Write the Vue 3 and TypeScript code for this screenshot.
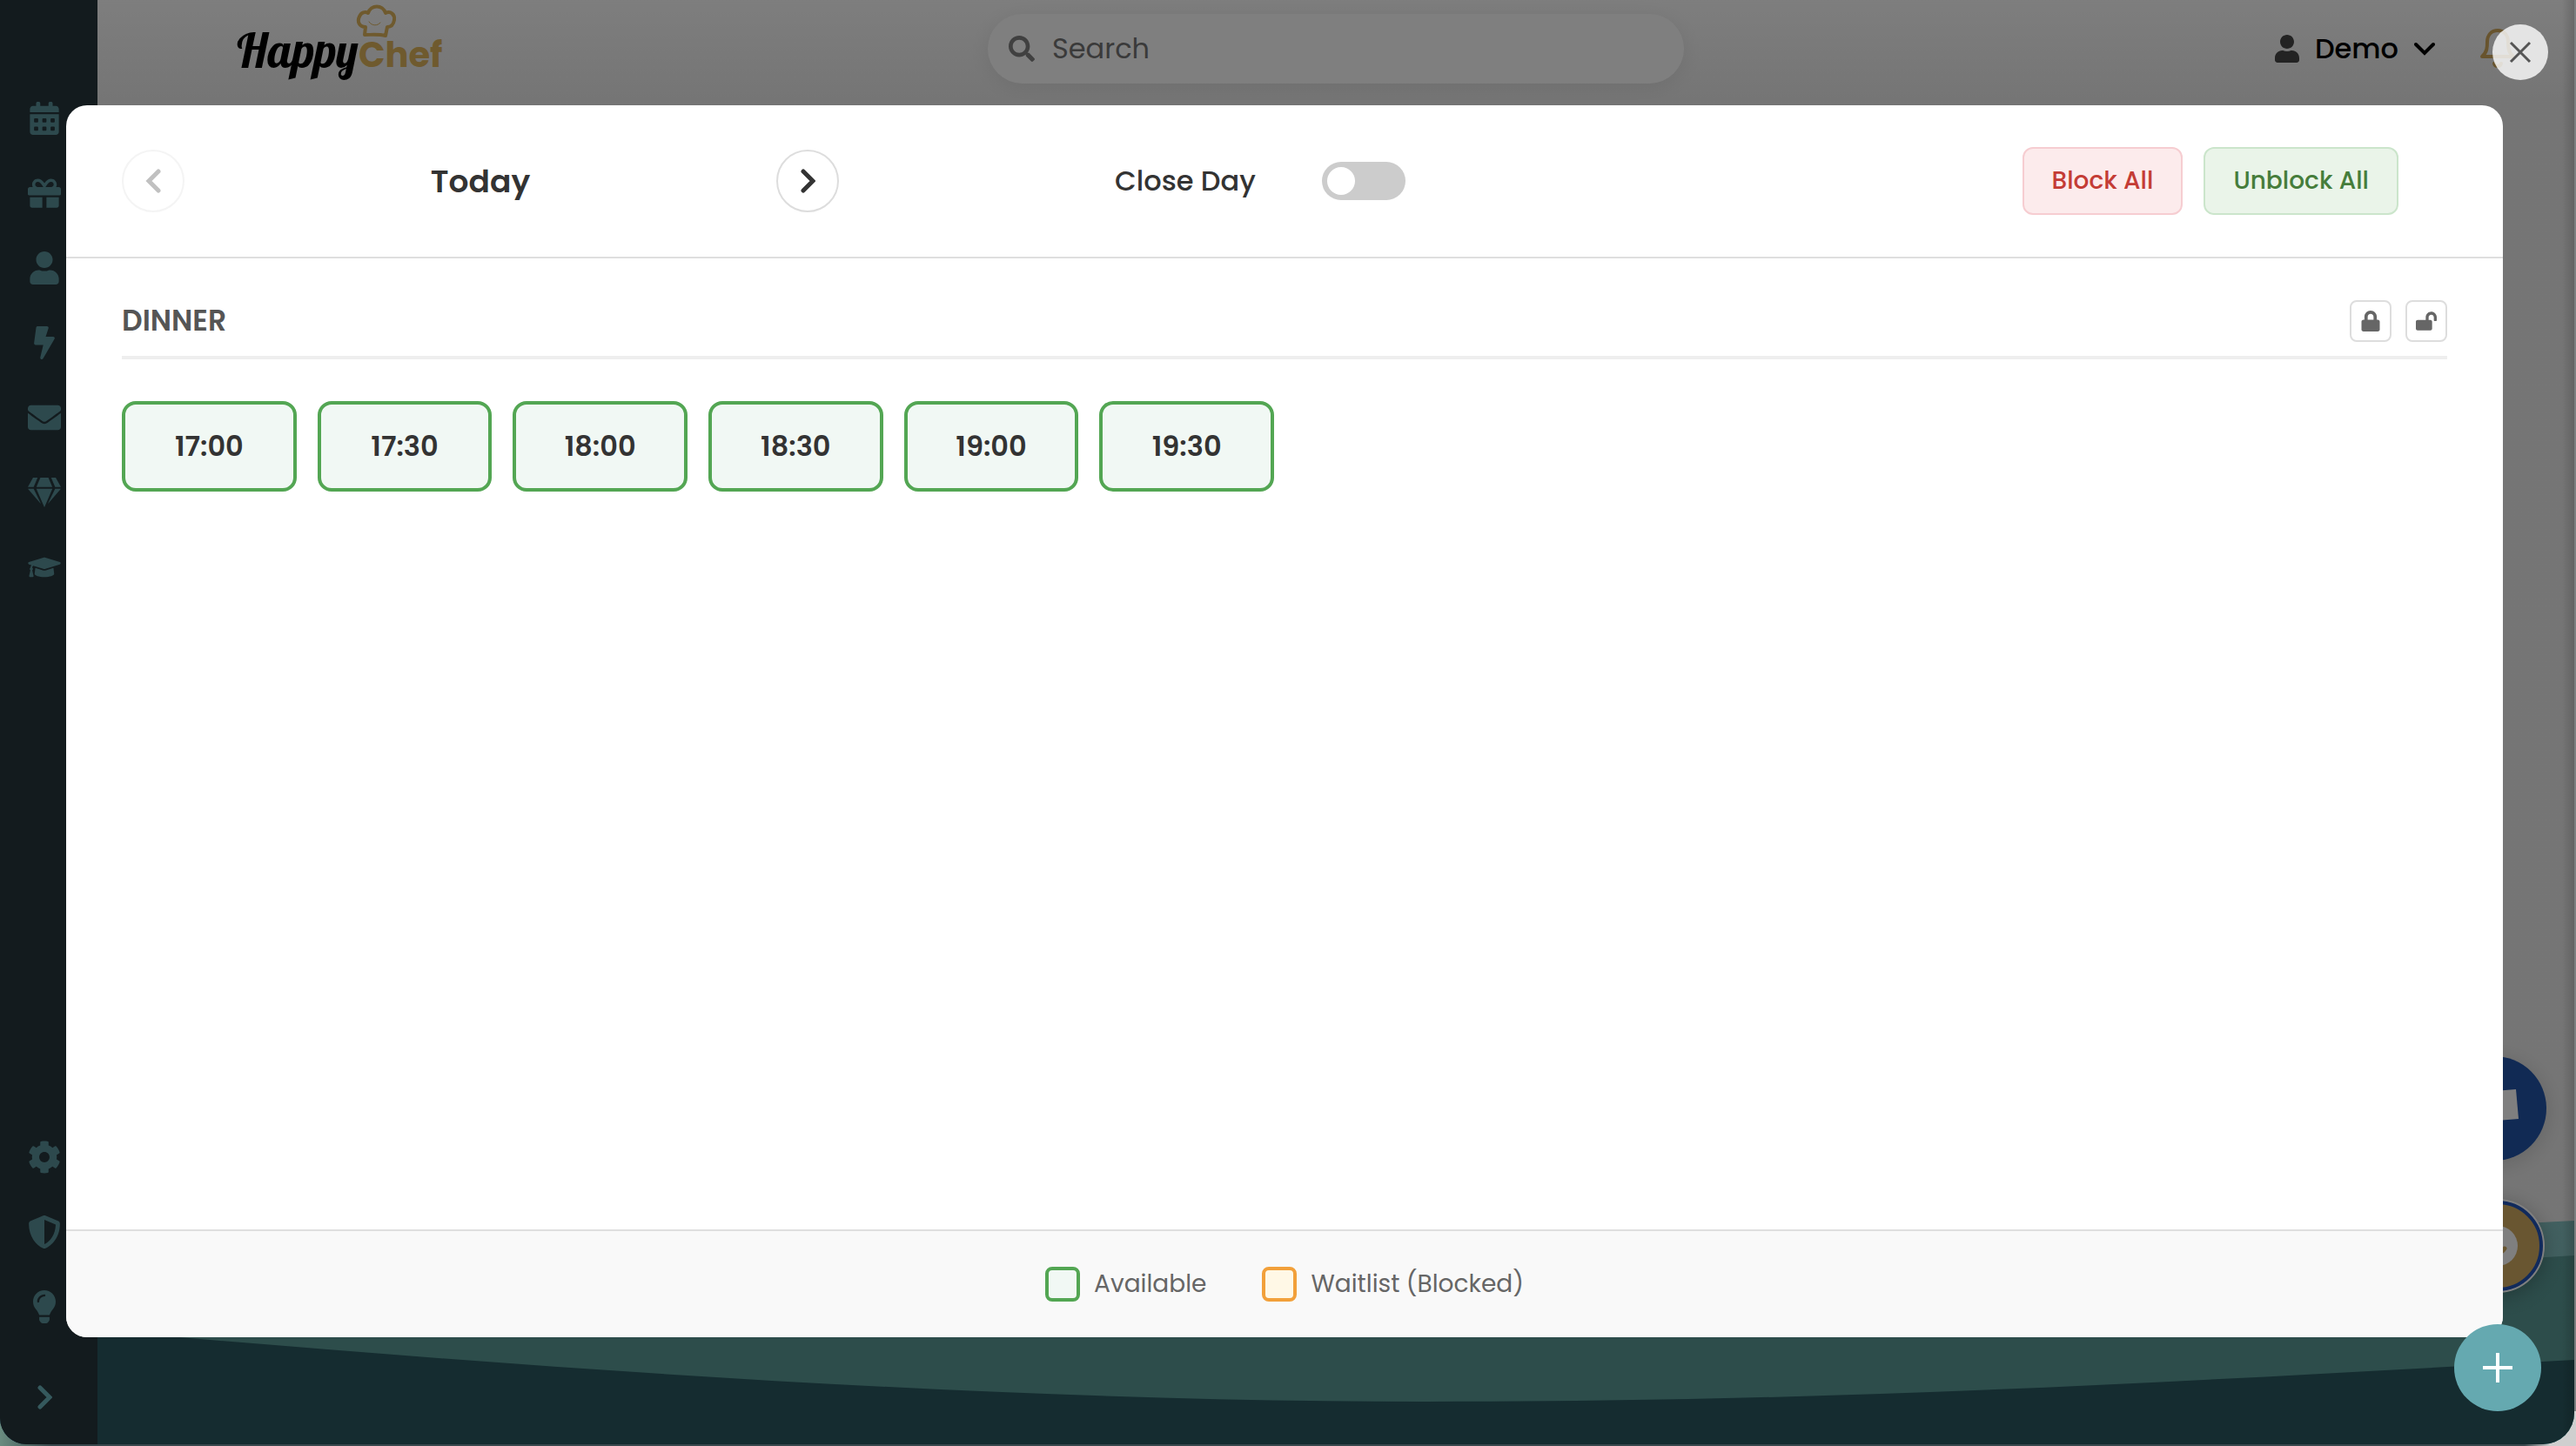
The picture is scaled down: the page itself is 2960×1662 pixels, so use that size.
<script setup lang="ts">
import { ref } from 'vue'

interface NavIcon {
  label: string
  viewBox: string
  width: number
  height: number
  path: string
}

const mainNav: NavIcon[] = [
  {
    label: 'Calendar', viewBox: '0 0 448 512', width: 34, height: 38,
    path: 'M0 464c0 26.500 21.500 48 48 48h352c26.500 0 48-21.500 48-48V192H0zM64 268c0-7 5-12 12-12h40c7 0 12 5 12 12v40c0 7-5 12-12 12H76c-7 0-12-5-12-12zm128 0c0-7 5-12 12-12h40c7 0 12 5 12 12v40c0 7-5 12-12 12h-40c-7 0-12-5-12-12zm128 0c0-7 5-12 12-12h40c7 0 12 5 12 12v40c0 7-5 12-12 12h-40c-7 0-12-5-12-12zM64 396c0-7 5-12 12-12h40c7 0 12 5 12 12v40c0 7-5 12-12 12H76c-7 0-12-5-12-12zm128 0c0-7 5-12 12-12h40c7 0 12 5 12 12v40c0 7-5 12-12 12h-40c-7 0-12-5-12-12zm128 0c0-7 5-12 12-12h40c7 0 12 5 12 12v40c0 7-5 12-12 12h-40c-7 0-12-5-12-12zM400 64h-48V24c0-36-64-36-64 0v40H160V24c0-36-64-36-64 0v40H48C21.500 64 0 85.500 0 112v48h448v-48c0-26.500-21.500-48-48-48z',
  },
  {
    label: 'Vouchers', viewBox: '0 0 512 512', width: 38, height: 38,
    path: 'M32 448c0 17.7 14.3 32 32 32h160V320H32v128zm256 32h160c17.7 0 32-14.3 32-32V320H288v160zm192-320h-42.1c6.2-12.1 10.1-25.500 10.1-40 0-48.500-39.500-88-88-88-41.6 0-68.500 21.3-103 68.3-34.500-47-61.4-68.3-103-68.3-48.500 0-88 39.500-88 88 0 14.500 3.8 27.9 10.1 40H32c-17.7 0-32 14.3-32 32v80c0 8.8 7.2 16 16 16h480c8.8 0 16-7.2 16-16v-80c0-17.7-14.3-32-32-32zm-326.1 0c-22.1 0-40-17.9-40-40s17.9-40 40-40c19.9 0 34.6 3.3 86.1 80h-86.1zm206.1 0h-86.1c51.4-76.500 65.7-80 86.1-80 22.1 0 40 17.9 40 40s-17.9 40-40 40z',
  },
  {
    label: 'Guests', viewBox: '0 0 448 512', width: 34, height: 38,
    path: 'M224 256c70.7 0 128-57.3 128-128S294.7 0 224 0 96 57.3 96 128s57.3 128 128 128zm89.6 32h-16.7c-22.2 10.2-46.9 16-72.9 16s-50.6-5.8-72.9-16h-16.7C60.2 288 0 348.2 0 422.4V464c0 26.500 21.500 48 48 48h352c26.500 0 48-21.500 48-48v-41.6c0-74.2-60.2-134.4-134.4-134.4z',
  },
  {
    label: 'Automation', viewBox: '0 0 320 512', width: 24, height: 38,
    path: 'M296 160H180.6l42.6-129.8C227.2 15 215.7 0 200 0H56C44 0 33.8 8.9 32.2 20.8l-32 240C-1.7 275.2 9.500 288 24 288h118.7L96.6 482.500c-3.6 15.2 8 29.500 23.3 29.500 8.4 0 16.4-4.4 20.8-12l176-304c9.3-15.9-2.2-36-20.7-36z',
  },
  {
    label: 'Messages', viewBox: '0 0 512 512', width: 38, height: 38,
    path: 'M502.3 190.8c3.9-3.1 9.7-.2 9.7 4.7V400c0 26.500-21.500 48-48 48H48c-26.500 0-48-21.500-48-48V195.6c0-5 5.7-7.8 9.7-4.7 22.4 17.4 52.1 39.500 154.1 113.6 21.1 15.4 56.7 47.8 92.2 47.6 35.7.3 72-32.8 92.3-47.6 102-74.1 131.6-96.3 154-113.7zM256 320c23.2.4 56.6-29.2 73.4-41.4 132.7-96.3 142.8-104.7 173.4-128.7 5.8-4.500 9.2-11.500 9.2-18.9v-19c0-26.500-21.500-48-48-48H48c-26.500 0-48 21.500-48 48v19c0 7.4 3.4 14.3 9.2 18.9 30.6 23.9 40.7 32.4 173.4 128.7 16.8 12.2 50.2 41.8 73.4 41.4z',
  },
  {
    label: 'Loyalty', viewBox: '0 0 576 512', width: 38, height: 34,
    path: 'M485.500 0L576 160H474.9L405.7 0h79.8zm-128 0l69.2 160H149.3L218.500 0h139zm-267 0h79.8l-69.2 160H0L90.500 0zM0 192h100.7l123 251.7c1.500 3.1-2.7 5.9-5 3.3L0 192zm148.2 0h279.6l-137 318.2c-1 2.4-4.500 2.4-5.500 0L148.2 192zm204.1 251.7l123-251.7H576L357.3 446.9c-2.3 2.7-6.500-.1-5-3.2z',
  },
  {
    label: 'Academy', viewBox: '0 0 640 512', width: 38, height: 30,
    path: 'M622.34 153.2L343.4 67.500c-15.2-4.67-31.6-4.67-46.79 0L17.66 153.2c-23.54 7.23-23.54 38.36 0 45.59l48.63 14.94c-10.67 13.19-17.23 29.28-17.88 46.9C38.78 266.15 32 276.11 32 288c0 10.78 5.68 19.85 13.86 25.65L20.33 428.53C18.11 438.52 25.71 448 35.94 448h56.11c10.24 0 17.84-9.48 15.62-19.47L82.14 313.65C90.32 307.85 96 298.78 96 288c0-11.57-6.47-21.25-15.66-26.87.76-15.02 8.44-28.3 20.69-36.72L296.6 284.500c9.06 2.78 26.44 6.25 46.79 0l278.95-85.7c23.55-7.24 23.55-38.36 0-45.6zM352.79 315.09c-28.53 8.76-52.84 3.92-65.59 0l-145.02-44.55L128 384c0 35.35 85.96 64 192 64s192-28.65 192-64l-14.18-113.47-145.03 44.56z',
  },
]

const footNav: NavIcon[] = [
  {
    label: 'Settings', viewBox: '0 0 512 512', width: 38, height: 38,
    path: 'M487.4 315.7l-42.6-24.6c4.3-23.2 4.3-47 0-70.2l42.6-24.6c4.9-2.8 7.1-8.6 5.500-14-11.1-35.6-30-67.8-54.7-94.6-3.8-4.1-10-5.1-14.8-2.3L380.8 110c-17.9-15.4-38.500-27.3-60.8-35.1V25.8c0-5.6-3.9-10.500-9.4-11.7-36.7-8.2-74.3-7.8-109.2 0-5.500 1.2-9.4 6.1-9.4 11.7V75c-22.2 7.9-42.8 19.8-60.8 35.1L88.7 85.500c-4.9-2.8-11-1.9-14.8 2.3-24.7 26.7-43.6 58.9-54.7 94.6-1.7 5.4.6 11.2 5.500 14L67.3 221c-4.3 23.2-4.3 47 0 70.2l-42.6 24.6c-4.9 2.8-7.1 8.6-5.500 14 11.1 35.6 30 67.8 54.7 94.6 3.8 4.1 10 5.1 14.8 2.3l42.6-24.6c17.9 15.4 38.500 27.3 60.8 35.1v49.2c0 5.6 3.9 10.500 9.4 11.7 36.7 8.2 74.3 7.8 109.2 0 5.500-1.2 9.4-6.1 9.4-11.7v-49.2c22.2-7.9 42.8-19.8 60.8-35.1l42.6 24.6c4.9 2.8 11 1.9 14.8-2.3 24.7-26.7 43.6-58.9 54.7-94.6 1.500-5.500-.7-11.3-5.6-14.1zM256 336c-44.1 0-80-35.9-80-80s35.9-80 80-80 80 35.9 80 80-35.9 80-80 80z',
  },
  {
    label: 'Privacy', viewBox: '0 0 512 512', width: 38, height: 38,
    path: 'M466 84L274 4c-12-5-25-5-37 0L45 84C27 91 15 109 15 128c0 199 114 336 222 380 12 5 25 5 37 0 86-35 223-158 223-380 0-19-12-37-31-44zM256 446V67l175 73c-3 152-82 261-175 306z',
  },
  {
    label: 'Tips', viewBox: '0 0 352 512', width: 26, height: 38,
    path: 'M96 454c0 6 2 12 5 17l17 26c6 9 16 15 27 15h62c11 0 21-6 27-15l17-26c3-5 5-11 5-17v-38H96zM0 176c0 44 16 85 43 116 17 19 43 59 53 93v1h160v-1c10-34 36-74 53-93 27-31 43-72 43-116C352 79 273 0 175 0 74 0 0 82 0 176zm176-80c-44 0-80 36-80 80 0 9-7 16-16 16s-16-7-16-16c0-62 50-112 112-112 9 0 16 7 16 16s-7 16-16 16z',
  },
]

const userPath = mainNav[2].path
const slots = ref<string[]>(['17:00', '17:30', '18:00', '18:30', '19:00', '19:30'])
const closeDay = ref(false)
const query = ref('')
</script>

<template>
  <div class="shell">
    <svg class="waves" viewBox="0 0 2960 300" preserveAspectRatio="none" aria-hidden="true">
      <path fill="#84c0c0" d="M0 120C900 150 2000 90 2960 41V300H0z" />
      <path fill="#5a9a96" d="M0 130C900 200 2000 140 2960 81V300H0z" />
      <path fill="#2a5860" d="M0 157C600 211 1150 249 1640 249S2500 226 2960 201V300H0z" />
    </svg>

    <aside class="sidebar">
      <nav class="nav" aria-label="Main">
        <a v-for="item in mainNav" :key="item.label" href="#" :aria-label="item.label">
          <svg :viewBox="item.viewBox" :width="item.width" :height="item.height"><path fill-rule="evenodd" :d="item.path" /></svg>
        </a>
      </nav>
      <nav class="nav" aria-label="Tools">
        <a v-for="item in footNav" :key="item.label" href="#" :aria-label="item.label">
          <svg :viewBox="item.viewBox" :width="item.width" :height="item.height"><path fill-rule="evenodd" :d="item.path" /></svg>
        </a>
        <button class="expand" type="button" aria-label="Expand menu">
          <svg viewBox="0 0 18 28" width="18" height="28"><path d="M4 3l11 11L4 25" /></svg>
        </button>
      </nav>
    </aside>

    <header class="topbar">
      <a class="logo" href="#" aria-label="HappyChef">
        <svg viewBox="0 0 250 100" width="250" height="100">
          <g fill="none" stroke="#deb45c" stroke-width="4" stroke-linejoin="round" stroke-linecap="round">
            <path d="M157 40L158 31C151 31 148 25 151 19C153 14 158 13 161 15C164 5 178 5 181 15C187 12 192 17 191 23C190 29 187 31 183 31L181 41C173 39 165 40 157 40z" />
            <path stroke-width="1" d="M162 25c3 5 10 5 13 1" />
          </g>
          <text class="logo-happy" x="10" y="78">Happy</text>
          <text class="logo-chef" x="150" y="77">Chef</text>
        </svg>
      </a>
      <label class="search">
        <svg viewBox="0 0 512 512" width="30" height="30"><path d="M505 442.7L405.3 343c-4.500-4.500-10.6-7-17-7H372c27.6-35.3 44-79.7 44-128C416 93.1 322.9 0 208 0S0 93.1 0 208s93.1 208 208 208c48.3 0 92.7-16.4 128-44v16.3c0 6.4 2.500 12.500 7 17l99.7 99.7c9.4 9.4 24.6 9.4 33.9 0l28.3-28.3c9.4-9.4 9.4-24.6.1-34zM208 336c-70.7 0-128-57.2-128-128 0-70.7 57.2-128 128-128 70.7 0 128 57.2 128 128 0 70.7-57.2 128-128 128z" /></svg>
        <input v-model="query" type="search" placeholder="Search" aria-label="Search" />
      </label>
      <div class="account">
        <button class="user" type="button">
          <svg viewBox="0 0 448 512" width="28" height="32"><path :d="userPath" fill="#464646" /></svg>
          <span>Demo</span>
          <svg viewBox="0 0 24 16" width="24" height="16"><path d="M2 3l10 10L22 3" fill="none" stroke="#000" stroke-width="4" stroke-linecap="round" /></svg>
        </button>
        <button class="bell" type="button" aria-label="Notifications">
          <svg viewBox="0 0 40 48" width="40" height="48">
            <g fill="none" stroke="#d0a85c" stroke-width="4" stroke-linecap="round" stroke-linejoin="round">
              <path d="M2 33c6-5 6-11 6-17C8 8 13 3 20 3s12 5 12 13c0 6 0 12 6 17z" />
              <path d="M16 41c1 4 7 4 8 0" />
            </g>
          </svg>
        </button>
      </div>
    </header>

    <div class="widgets">
      <button class="widget chat" type="button" aria-label="Chat">
        <svg viewBox="0 0 120 120" width="120" height="120"><path fill="#fff" d="M35 42l50-4 3 34-50 4z" /></svg>
      </button>
      <button class="widget badge" type="button" aria-label="Assistant">
        <svg viewBox="0 0 96 96" width="96" height="96"><circle cx="48" cy="48" r="23" fill="#fff" /><path d="M38 45c2 12 14 14 18 6" fill="none" stroke="#d2ac62" stroke-width="5" stroke-linecap="round" /></svg>
      </button>
    </div>

    <div class="overlay">
      <section class="dialog" role="dialog" aria-modal="true" aria-label="Availability">
        <header class="dialog-head">
          <div class="day">
            <button class="round" type="button" disabled aria-label="Previous day">
              <svg viewBox="0 0 18 28" width="18" height="28"><path d="M15 3L4 14l11 11" /></svg>
            </button>
            <h2>Today</h2>
            <button class="round" type="button" aria-label="Next day">
              <svg viewBox="0 0 18 28" width="18" height="28"><path d="M4 3l11 11L4 25" /></svg>
            </button>
          </div>
          <div class="close-day">
            <label for="close-day">Close Day</label>
            <input id="close-day" v-model="closeDay" class="switch" type="checkbox" />
          </div>
          <div class="actions">
            <button class="action block" type="button">Block All</button>
            <button class="action unblock" type="button">Unblock All</button>
          </div>
        </header>

        <div class="dialog-body">
          <div class="meal-head">
            <h3>DINNER</h3>
            <div class="locks">
              <button type="button" aria-label="Block dinner">
                <svg viewBox="0 0 448 512" width="22" height="24"><path d="M400 224h-24v-72C376 68.2 307.8 0 224 0S72 68.2 72 152v72H48c-26.500 0-48 21.500-48 48v192c0 26.500 21.500 48 48 48h352c26.500 0 48-21.500 48-48V272c0-26.500-21.500-48-48-48zm-104 0H152v-72c0-39.7 32.3-72 72-72s72 32.3 72 72v72z" /></svg>
              </button>
              <button type="button" aria-label="Unblock dinner">
                <svg viewBox="0 0 576 512" width="24" height="22"><path d="M423.500 0C339.500.3 272 69.500 272 153.500V224H48c-26.500 0-48 21.500-48 48v192c0 26.500 21.500 48 48 48h352c26.500 0 48-21.500 48-48V272c0-26.500-21.500-48-48-48h-48v-71.1c0-39.6 31.7-72.500 71.3-72.9 40-.4 72.7 32.1 72.7 72v80c0 13.3 10.7 24 24 24h32c13.3 0 24-10.7 24-24v-80C576 68 507.500-.3 423.500 0z" /></svg>
              </button>
            </div>
          </div>
          <div class="slots">
            <button v-for="time in slots" :key="time" class="slot" type="button">{{ time }}</button>
          </div>
        </div>

        <footer class="legend">
          <div class="legend-item"><span class="swatch available"></span>Available</div>
          <div class="legend-item"><span class="swatch waitlist"></span>Waitlist (Blocked)</div>
        </footer>
      </section>
      <button class="dismiss" type="button" aria-label="Close">
        <svg viewBox="0 0 26 26" width="26" height="26"><path d="M2 2l22 22M24 2L2 24" /></svg>
      </button>
    </div>

    <button class="fab" type="button" aria-label="Add">
      <svg viewBox="0 0 34 34" width="34" height="34"><path d="M17 0v34M0 17h34" /></svg>
    </button>
  </div>
</template>

<style>
html {
  min-height: 100vh;
  background: linear-gradient(90deg, #6a8c80, #39484d 2%, #39484d 98%, #cfcfcf 99%) bottom / 100% 40px no-repeat #7c7f80;
}
</style>

<style scoped>
.shell,
.shell * {
  box-sizing: border-box;
}

.shell {
  position: relative;
  display: grid;
  grid-template-columns: 112px 1fr;
  height: calc(100vh - 2px);
  margin-right: 2px;
  overflow: hidden;
  border-radius: 0 0 36px 30px;
  background: linear-gradient(#fcfcfc, #ebebeb 112px);
  font-family: Poppins, Inter, "Liberation Sans", sans-serif;
  color: #333;
}

button {
  display: inline-flex;
  align-items: center;
  justify-content: center;
  padding: 0;
  border: 0;
  background: none;
  font: inherit;
  color: inherit;
}

h2,
h3 {
  margin: 0;
}

.waves {
  position: absolute;
  left: 0;
  bottom: -2px;
  width: 100%;
  height: 300px;
}

/* Sidebar */
.sidebar {
  position: relative;
  display: flex;
  flex-direction: column;
  justify-content: space-between;
  padding: 93px 10px 14px 0;
  background: #26363c;
}

.nav {
  display: flex;
  flex-direction: column;
}

.nav a {
  display: flex;
  align-items: center;
  justify-content: center;
  height: 86px;
}

.nav a svg {
  fill: #5a929a;
}

.expand {
  height: 80px;
  margin-top: 21px;
}

.expand svg {
  fill: none;
  stroke: #6ab2ba;
  stroke-width: 5;
  stroke-linecap: round;
}

/* Top bar */
.topbar {
  position: relative;
  display: grid;
  grid-template-columns: 1fr 800px 1fr;
  align-items: center;
  height: 112px;
}

.logo {
  display: flex;
  padding-left: 150px;
}

.logo svg {
  margin-bottom: 12px;
}

.logo-happy {
  font: 400 54px Lobster, "Kaushan Script", Pacifico, "Dancing Script", cursive;
  fill: #000;
}

.logo-chef {
  font: 700 40px Poppins, Lato, sans-serif;
  fill: #deb45c;
}

.search {
  display: flex;
  align-items: center;
  gap: 20px;
  height: 80px;
  padding: 0 24px;
  border-radius: 40px;
  background: #fff;
  box-shadow: 0 4px 24px rgba(0, 0, 0, 0.07);
}

.search svg {
  fill: #808080;
}

.search input {
  flex: 1;
  padding: 0;
  border: 0;
  outline: 0;
  background: none;
  font: inherit;
  font-size: 32px;
  color: #333;
}

.search input::placeholder {
  color: #757575;
  opacity: 1;
}

.account {
  display: flex;
  align-items: center;
  justify-content: flex-end;
  gap: 52px;
  padding-right: 68px;
}

.user {
  gap: 18px;
  font-size: 32px;
  font-weight: 500;
  color: #000;
}

/* Floating helpers */
.widgets {
  position: absolute;
  right: 32px;
  bottom: 176px;
  display: flex;
  flex-direction: column;
  align-items: flex-end;
  gap: 46px;
}

.widget {
  border-radius: 50%;
}

.chat {
  background: #2254a8;
  box-shadow: 0 4px 24px rgba(0, 0, 0, 0.15);
}

.badge {
  margin-right: 4px;
  border: 4px solid #2254b8;
  background: #d2ac62;
  box-shadow: 0 0 0 2px #fff, 0 4px 24px rgba(0, 0, 0, 0.3);
}

/* Dialog */
.overlay {
  position: absolute;
  inset: 0;
  display: flex;
  padding: 121px 82px 123px 76px;
  background: linear-gradient(270deg, rgba(0, 0, 0, 0.58), rgba(0, 0, 0, 0.5) 14px);
}

.dialog {
  display: flex;
  flex: 1;
  flex-direction: column;
  overflow: hidden;
  border-radius: 24px;
  background: #fff;
}

.dialog-head {
  display: grid;
  grid-template-columns: 1fr 1fr 1fr;
  gap: 72px;
  align-items: center;
  height: 176px;
  padding: 0 120px 0 64px;
  border-bottom: 2px solid #dfdfdf;
}

.day {
  display: flex;
  align-items: center;
  justify-content: space-between;
}

.day h2 {
  font-size: 36px;
  font-weight: 600;
}

.round {
  width: 72px;
  height: 72px;
  border: 2px solid #ddd;
  border-radius: 50%;
}

.round:disabled {
  opacity: 0.3;
}

.round svg {
  fill: none;
  stroke: #333;
  stroke-width: 5;
  stroke-linecap: round;
}

.close-day {
  display: flex;
  align-items: center;
  justify-content: center;
  gap: 76px;
  font-size: 32px;
  font-weight: 500;
}

.switch {
  display: flex;
  align-items: center;
  width: 96px;
  height: 44px;
  margin: 0;
  padding: 0 6px;
  border-radius: 22px;
  background: #ccc;
  appearance: none;
}

.switch::before {
  content: "";
  width: 32px;
  height: 32px;
  border-radius: 50%;
  background: #fff;
}

.switch:checked {
  justify-content: flex-end;
  background: #53a653;
}

.actions {
  display: flex;
  justify-content: flex-end;
  gap: 24px;
}

.action {
  height: 78px;
  padding: 0 32px;
  border: 2px solid;
  border-radius: 12px;
  font-size: 28px;
  font-weight: 500;
}

.block {
  border-color: #f6cdd1;
  background: #fcebec;
  color: #c43c35;
}

.unblock {
  border-color: #cbe5cb;
  background: #eaf4e9;
  color: #467d3b;
}

.dialog-body {
  flex: 1;
  padding: 48px 64px;
}

.meal-head {
  display: flex;
  align-items: center;
  justify-content: space-between;
  padding-bottom: 16px;
  border-bottom: 4px solid #eee;
}

.meal-head h3 {
  font-size: 33px;
  line-height: 48px;
  font-weight: 600;
  color: #555;
}

.locks {
  display: flex;
  gap: 16px;
}

.locks button {
  width: 48px;
  height: 48px;
  border: 2px solid #ddd;
  border-radius: 8px;
}

.locks svg {
  fill: #666;
}

.slots {
  display: grid;
  grid-template-columns: repeat(auto-fill, minmax(200px, 1fr));
  gap: 24px;
  padding-top: 48px;
}

.slot {
  height: 104px;
  border: 4px solid #53a653;
  border-radius: 16px;
  background: #f1f8f4;
  font-size: 32px;
  font-weight: 600;
}

.legend {
  display: flex;
  align-items: center;
  justify-content: center;
  gap: 64px;
  height: 124px;
  border-top: 2px solid #dfdfdf;
  background: #f9f9f9;
  font-size: 28px;
  color: #666;
}

.legend-item {
  display: flex;
  align-items: center;
  gap: 16px;
}

.swatch {
  width: 40px;
  height: 40px;
  border: 4px solid;
  border-radius: 8px;
}

.available {
  border-color: #53a653;
  background: #f1f8f4;
}

.waitlist {
  border-color: #f2a03a;
  background: #fff8e6;
}

.dismiss {
  position: absolute;
  top: 28px;
  right: 30px;
  width: 64px;
  height: 64px;
  border-radius: 50%;
  background: rgba(255, 255, 255, 0.8);
}

.dismiss svg {
  fill: none;
  stroke: #555;
  stroke-width: 3;
}

.fab {
  position: absolute;
  right: 38px;
  bottom: 38px;
  width: 100px;
  height: 100px;
  border-radius: 50%;
  background: #65a9b0;
}

.fab svg {
  stroke: #fff;
  stroke-width: 4;
}
</style>
